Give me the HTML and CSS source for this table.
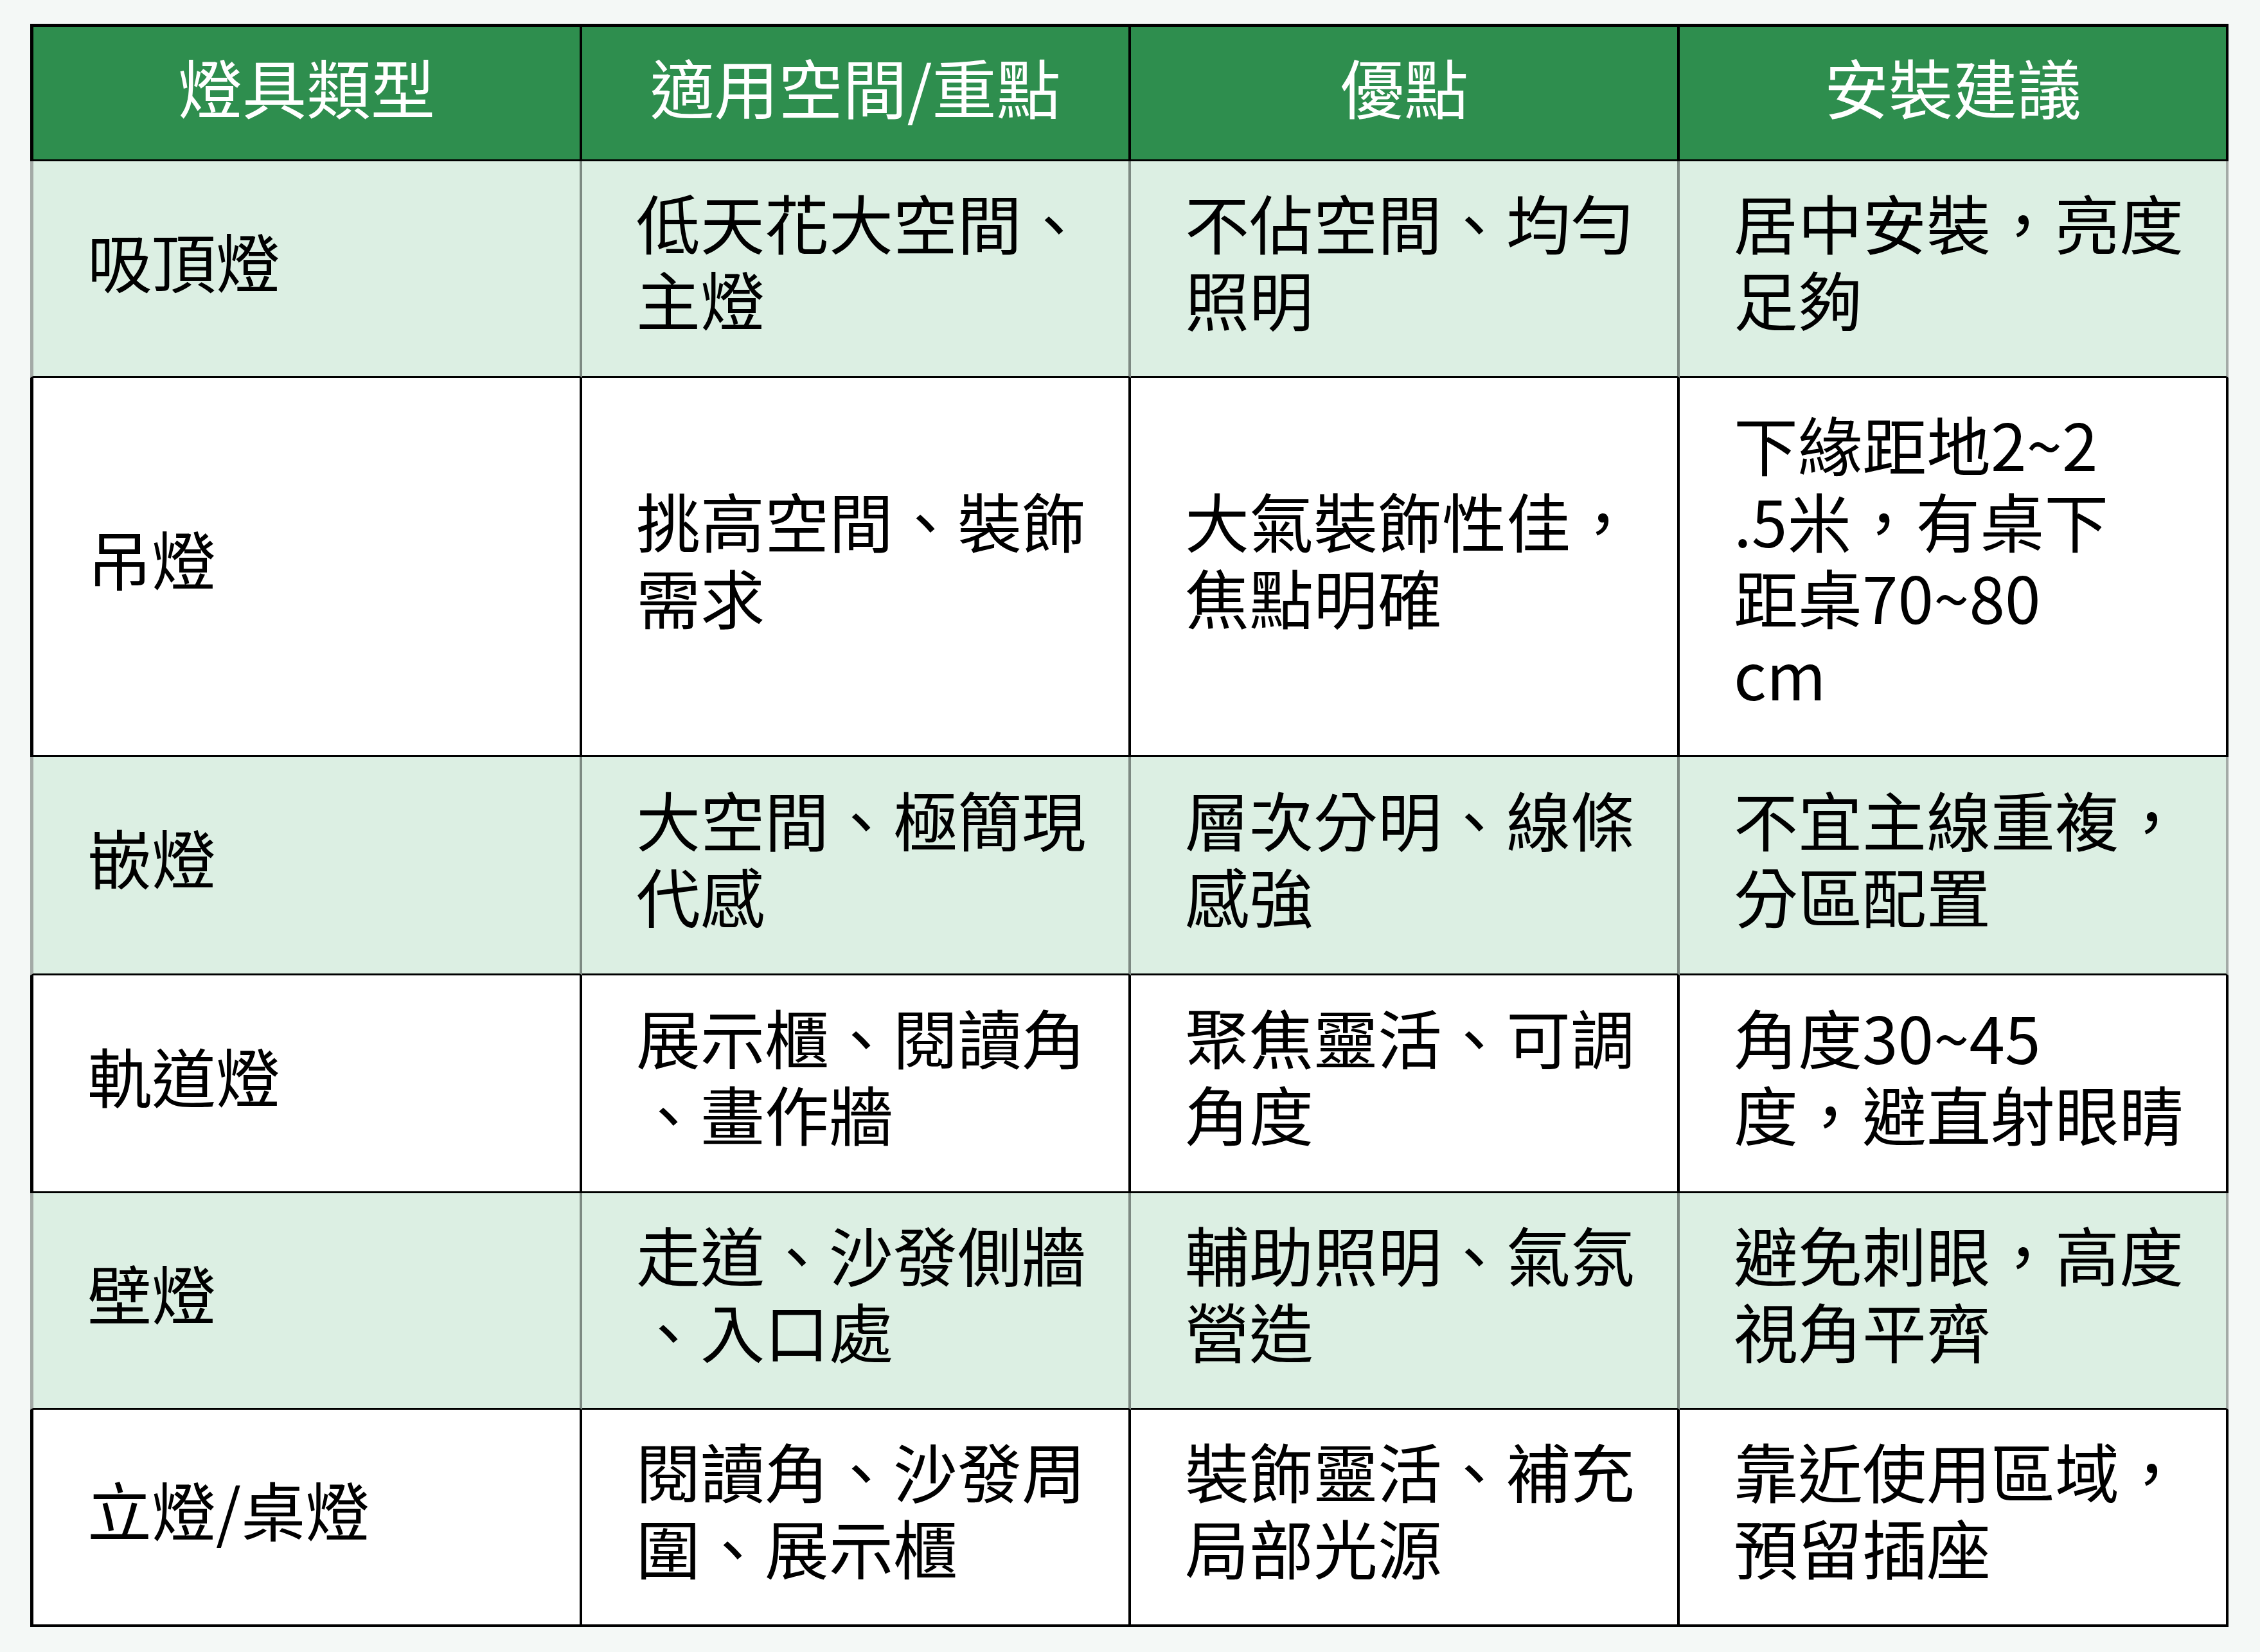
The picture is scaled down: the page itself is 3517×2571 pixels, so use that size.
FILE: index.html
```html
<!DOCTYPE html>
<html lang="zh-Hant">
<head>
<meta charset="utf-8">
<title>燈具類型</title>
<link rel="stylesheet" href="styles.css">
</head>
<body>
<div class="table">
  <div class="cell head first">燈具類型</div>
  <div class="cell head">適用空間/重點</div>
  <div class="cell head">優點</div>
  <div class="cell head">安裝建議</div>

  <div class="cell tint first">吸頂燈</div>
  <div class="cell tint">低天花大空間、<br>主燈</div>
  <div class="cell tint">不佔空間、均勻<br>照明</div>
  <div class="cell tint last">居中安裝，亮度<br>足夠</div>

  <div class="cell plain first">吊燈</div>
  <div class="cell plain">挑高空間、裝飾<br>需求</div>
  <div class="cell plain">大氣裝飾性佳，<br>焦點明確</div>
  <div class="cell plain last">下緣距地2~2<br>.5米，有桌下<br>距桌70~80<br>cm</div>

  <div class="cell tint first">嵌燈</div>
  <div class="cell tint">大空間、極簡現<br>代感</div>
  <div class="cell tint">層次分明、線條<br>感強</div>
  <div class="cell tint last">不宜主線重複，<br>分區配置</div>

  <div class="cell plain first">軌道燈</div>
  <div class="cell plain">展示櫃、閱讀角<br>、畫作牆</div>
  <div class="cell plain">聚焦靈活、可調<br>角度</div>
  <div class="cell plain last">角度30~45<br>度，避直射眼睛</div>

  <div class="cell tint first">壁燈</div>
  <div class="cell tint">走道、沙發側牆<br>、入口處</div>
  <div class="cell tint">輔助照明、氣氛<br>營造</div>
  <div class="cell tint last">避免刺眼，高度<br>視角平齊</div>

  <div class="cell plain first bottom">立燈/桌燈</div>
  <div class="cell plain bottom">閱讀角、沙發周<br>圍、展示櫃</div>
  <div class="cell plain bottom">裝飾靈活、補充<br>局部光源</div>
  <div class="cell plain last bottom">靠近使用區域，<br>預留插座</div>
</div>
</body>
</html>
```

FILE: styles.css
```css
* { box-sizing: border-box; }

html, body {
  margin: 0;
  padding: 0;
  background: #f4f8f6;
}

body {
  padding: 37px 0 0 47px;
  font-family: "Noto Sans CJK TC", "Noto Sans CJK SC", "Noto Sans", sans-serif;
}

.table {
  display: grid;
  grid-template-columns: 859px 854px 854px 854px;
  grid-template-rows: 214px 337px 590px 340px 339px 337px 338px;
}

.cell {
  display: flex;
  align-items: center;
  font-size: 100px;
  line-height: 119px;
  color: #000;
  white-space: nowrap;
  padding: 0 0 28px 84px;
  border-right: 4px solid #000;
  border-bottom: 3px solid #000;
}

.cell.first { border-left: 5px solid #000; }

.cell.head {
  background: #2e8e4e;
  color: #fff;
  justify-content: center;
  padding: 0 0 24px 0;
  border-top: 5px solid #000;
}

.cell.tint {
  background: #dcefe3;
  border-right-color: #7d8982;
}

.cell.tint.first { border-left-color: #a3aaa6; }
.cell.tint.last { border-right-color: #a3aaa6; }

.cell.plain { background: #ffffff; }

.cell.bottom { border-bottom-width: 4px; }
```
